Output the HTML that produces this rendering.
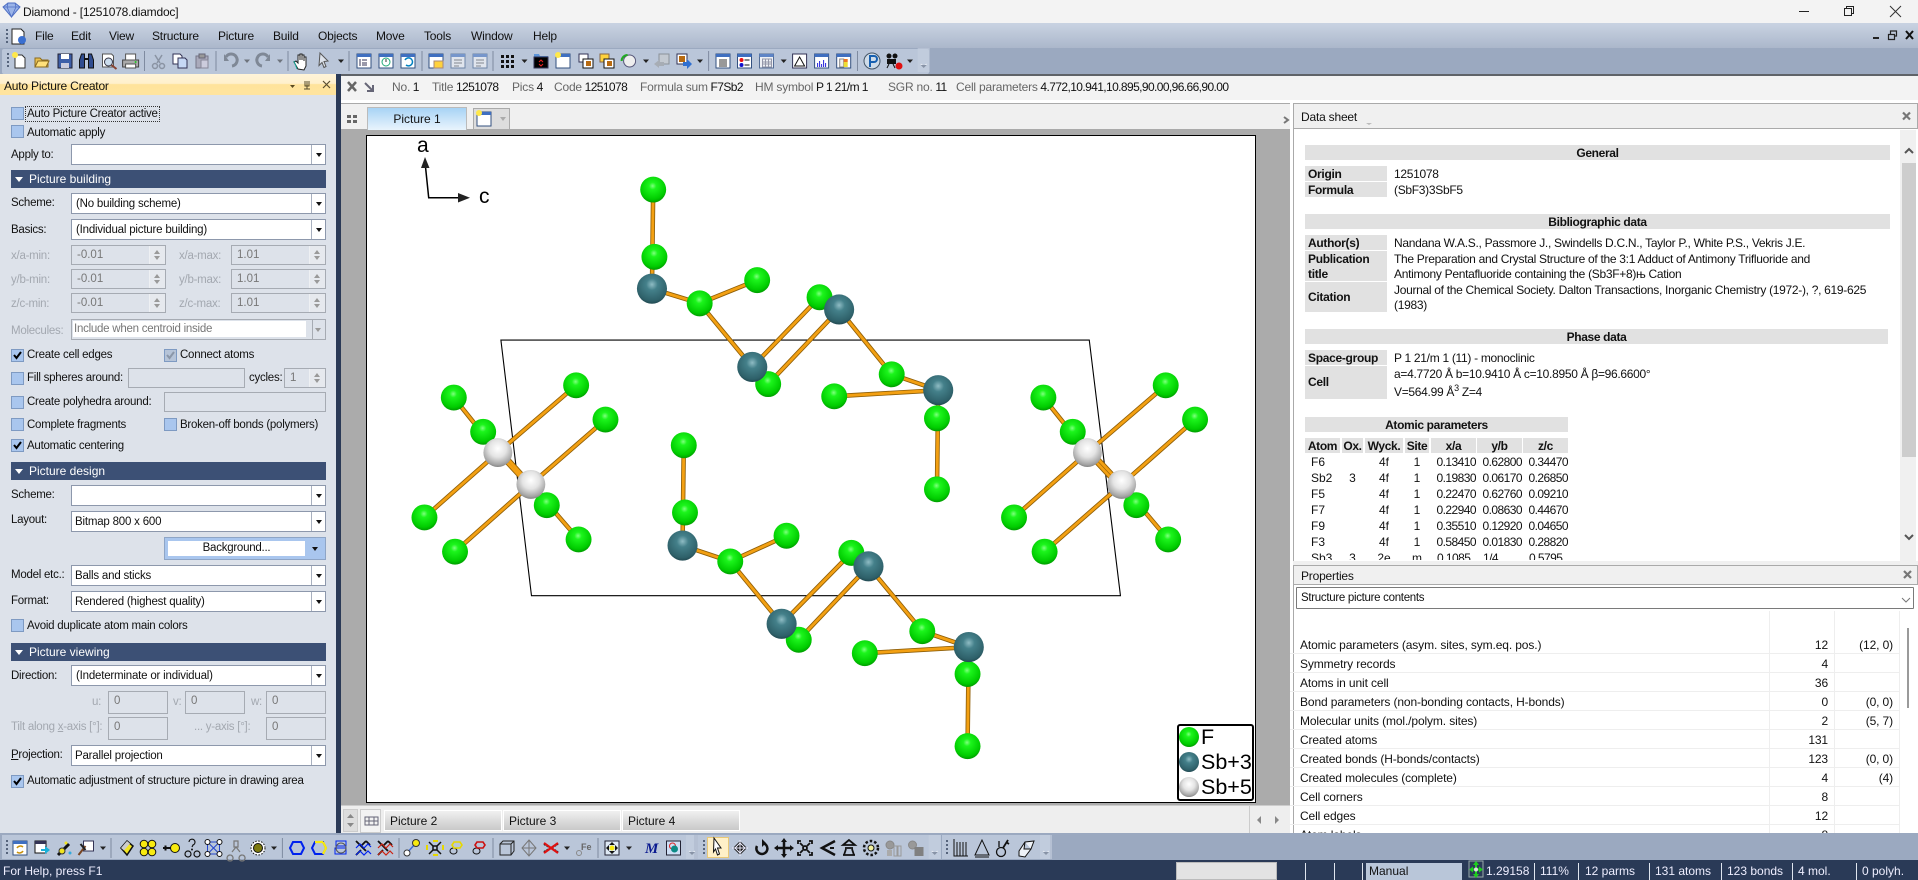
<!DOCTYPE html>
<html><head><meta charset="utf-8"><title>Diamond</title>
<style>
*{box-sizing:border-box}
html,body{margin:0;padding:0;width:1918px;height:880px;overflow:hidden;background:#9ba9c0}
body{position:relative;font:11.5px/16px "Liberation Sans",sans-serif;color:#111}
.a,.t,.c,.k,.s,.b,.i{position:absolute}
.t{white-space:nowrap;line-height:18px;letter-spacing:-.25px}
.t[style*="font-size"]{line-height:16px;letter-spacing:-.2px}
.t[style*="top:79px"]{letter-spacing:-.6px}
.c{left:71px;width:255px;height:21px;background:#fff;border:1px solid #8d98ac;padding:2px 3px;white-space:nowrap;letter-spacing:-.2px}
.c:after{content:"";position:absolute;right:0;top:0;bottom:0;width:13px;background:#fff;border-left:1px solid #a8b0bf}
.c:before{content:"";position:absolute;right:3px;top:8px;border:3px solid transparent;border-top:4px solid #111;border-bottom:0;z-index:2}
.k{left:11px;width:13px;height:13px;background:#a9c6ee;border:1px solid #7e9ac2}
.k svg{position:absolute;left:0;top:0}
.s{height:20px;background:#dde2ea;border:1px solid #a6abb3;color:#777;padding:1px 5px}
.s i{position:absolute;right:0;top:0;bottom:0;width:16px;background:#e6e9ee;border-left:1px solid #eef0f3}
.s i:before{content:"";position:absolute;left:4px;top:4px;border:3px solid transparent;border-bottom:4px solid #999;border-top:0}
.s i:after{content:"";position:absolute;left:4px;bottom:4px;border:3px solid transparent;border-top:4px solid #999;border-bottom:0}
.i{height:23px;background:#dde2ea;border:1px solid #a6abb3;color:#777;padding:1px 5px}
.b{left:11px;width:315px;height:18px;background:#3c5075;color:#fff;font-size:12px;line-height:18px;padding-left:18px}
.b:before{content:"";position:absolute;left:4px;top:7px;border:4px solid transparent;border-top:5px solid #fff;border-bottom:0}
.d{color:#a3a8b0}
.h{position:absolute;background:#e1e1e1;font-weight:bold;font-size:12px;line-height:15px;height:15px;padding-top:1px;text-align:center;color:#111;letter-spacing:-.35px}
.l{position:absolute;left:1305px;width:82px;height:15px;background:#e1e1e1;font-weight:bold;font-size:12px;line-height:15px;padding:1px 0 0 3px;letter-spacing:-.3px}
.v{position:absolute;left:1394px;margin-top:1px;font-size:12px;line-height:15px;white-space:nowrap;letter-spacing:-.3px}
.g{color:#666;letter-spacing:-.2px}
.r{position:absolute;left:1290px;width:610px;height:19px;font-size:12px;line-height:20px;border-bottom:1px solid #eee;letter-spacing:-.12px}
.r b{font-weight:normal;position:absolute;left:10px;top:0;white-space:nowrap}
.r u{text-decoration:none;position:absolute;right:72px;top:0}
.r s{text-decoration:none;position:absolute;right:7px;top:0}
table{position:absolute;left:1305px;top:454px;border-collapse:collapse;table-layout:fixed;width:263px;font-size:12px}
td{height:16px;padding:0;line-height:16px;text-align:center;overflow:hidden}
td.n{text-align:right;letter-spacing:-.55px}
td.f{text-align:left;padding-left:6px}
td.e{text-align:left;padding-left:7px;letter-spacing:-.55px}
.st{position:absolute;top:862px;color:#eef;font-size:12px;line-height:18px;white-space:nowrap}
.dv{position:absolute;top:863px;width:1px;height:17px;background:#dfe5ee}
.tab{position:absolute;top:810px;height:21px;border:1px solid #fff;background:linear-gradient(#f0f0f0,#c9c9c9);padding:2px 5px;font-size:12px;line-height:16px}
</style></head><body>

<!-- title bar -->
<div class="a" style="left:0;top:0;width:1918px;height:23px;background:#f3f3f3"></div>
<div class="t" style="left:23px;top:4px;font-size:12px;color:#111">Diamond - [1251078.diamdoc]</div>

<!-- menu + toolbar backgrounds -->
<div class="a" style="left:0;top:23px;width:1918px;height:25px;background:linear-gradient(#c9d3e2,#abb7cb)"></div>
<div class="a" style="left:0;top:48px;width:1918px;height:26px;background:#9ba9c0"></div>
<div class="a" style="left:2px;top:49px;width:927px;height:25px;background:#bac6d9;border-radius:2px"></div>
<div class="a" style="left:0;top:74px;width:1918px;height:2px;background:#5f6368"></div>
<div class="t" style="left:35px;top:28px;font-size:12px">File</div>
<div class="t" style="left:71px;top:28px;font-size:12px">Edit</div>
<div class="t" style="left:109px;top:28px;font-size:12px">View</div>
<div class="t" style="left:152px;top:28px;font-size:12px">Structure</div>
<div class="t" style="left:218px;top:28px;font-size:12px">Picture</div>
<div class="t" style="left:273px;top:28px;font-size:12px">Build</div>
<div class="t" style="left:318px;top:28px;font-size:12px">Objects</div>
<div class="t" style="left:376px;top:28px;font-size:12px">Move</div>
<div class="t" style="left:424px;top:28px;font-size:12px">Tools</div>
<div class="t" style="left:471px;top:28px;font-size:12px">Window</div>
<div class="t" style="left:533px;top:28px;font-size:12px">Help</div>

<!-- left panel -->
<div class="a" style="left:0;top:74px;width:336px;height:759px;background:#dde2ea"></div>
<div class="a" style="left:336px;top:74px;width:5px;height:759px;background:#2b3a57"></div>
<div class="a" style="left:0;top:74px;width:336px;height:21px;background:linear-gradient(#fff4d9 0,#fff0cc 45%,#ffe39b 50%,#ffe49f 100%)"></div>
<div class="t" style="left:4px;top:78px;font-size:12px">Auto Picture Creator</div>

<div class="k" style="top:107px"></div>
<div class="t" style="left:26px;top:107px;outline:1px dotted #333;padding:0 1px;height:14px;line-height:14px">Auto Picture Creator active</div>
<div class="k" style="top:125px"></div>
<div class="t" style="left:27px;top:124px">Automatic apply</div>
<div class="t" style="left:11px;top:146px">Apply to:</div>
<div class="c" style="top:144px"></div>
<div class="b" style="top:170px">Picture building</div>
<div class="t" style="left:11px;top:194px">Scheme:</div>
<div class="c" style="top:193px;padding-left:4px">(No building scheme)</div>
<div class="t" style="left:11px;top:221px">Basics:</div>
<div class="c" style="top:219px;padding-left:4px">(Individual picture building)</div>

<div class="t d" style="left:11px;top:247px">x/a-min:</div><div class="s" style="left:71px;top:245px;width:95px">-0.01<i></i></div>
<div class="t d" style="left:179px;top:247px">x/a-max:</div><div class="s" style="left:231px;top:245px;width:95px">1.01<i></i></div>
<div class="t d" style="left:11px;top:271px">y/b-min:</div><div class="s" style="left:71px;top:269px;width:95px">-0.01<i></i></div>
<div class="t d" style="left:179px;top:271px">y/b-max:</div><div class="s" style="left:231px;top:269px;width:95px">1.01<i></i></div>
<div class="t d" style="left:11px;top:295px">z/c-min:</div><div class="s" style="left:71px;top:293px;width:95px">-0.01<i></i></div>
<div class="t d" style="left:179px;top:295px">z/c-max:</div><div class="s" style="left:231px;top:293px;width:95px">1.01<i></i></div>

<div class="t d" style="left:11px;top:322px">Molecules:</div>
<div class="a" style="left:71px;top:319px;width:255px;height:21px;background:#dde2ea;border:1px solid #a6abb3"></div>
<div class="t" style="left:73px;top:321px;width:233px;height:16px;background:#fff;color:#777;padding-left:1px;line-height:16px">Include when centroid inside</div>
<div class="a" style="left:312px;top:320px;width:1px;height:19px;background:#a6abb3"></div>
<div class="a" style="left:315px;top:328px;border:3px solid transparent;border-top:4px solid #999;border-bottom:0"></div>

<div class="k" style="top:349px"><svg width="11" height="11" viewBox="0 0 11 11"><path d="M2 5l2.5 3L9 2" fill="none" stroke="#000" stroke-width="2"/></svg></div>
<div class="t" style="left:27px;top:346px">Create cell edges</div>
<div class="k" style="left:164px;top:349px;background:#b6c4d8"><svg width="11" height="11" viewBox="0 0 11 11"><path d="M2 5l2.5 3L9 2" fill="none" stroke="#8b97a8" stroke-width="2"/></svg></div>
<div class="t" style="left:180px;top:346px">Connect atoms</div>

<div class="k" style="top:372px"></div>
<div class="t" style="left:27px;top:369px">Fill spheres around:</div>
<div class="a" style="left:128px;top:368px;width:117px;height:20px;background:#dde2ea;border:1px solid #a6abb3"></div>
<div class="t" style="left:249px;top:369px">cycles:</div>
<div class="s" style="left:284px;top:368px;width:42px">1<i></i></div>

<div class="k" style="top:396px"></div>
<div class="t" style="left:27px;top:393px">Create polyhedra around:</div>
<div class="a" style="left:164px;top:392px;width:162px;height:20px;background:#dde2ea;border:1px solid #a6abb3"></div>

<div class="k" style="top:418px"></div>
<div class="t" style="left:27px;top:416px">Complete fragments</div>
<div class="k" style="left:164px;top:418px"></div>
<div class="t" style="left:180px;top:416px">Broken-off bonds (polymers)</div>

<div class="k" style="top:439px"><svg width="11" height="11" viewBox="0 0 11 11"><path d="M2 5l2.5 3L9 2" fill="none" stroke="#000" stroke-width="2"/></svg></div>
<div class="t" style="left:27px;top:437px">Automatic centering</div>

<div class="b" style="top:462px">Picture design</div>
<div class="t" style="left:11px;top:486px">Scheme:</div>
<div class="c" style="top:485px"></div>
<div class="t" style="left:11px;top:511px">Layout:</div>
<div class="c" style="top:511px">Bitmap 800 x 600</div>
<div class="a" style="left:164px;top:537px;width:162px;height:23px;background:#a9c6ee;border:1px solid #8ea5c6"></div>
<div class="t" style="left:168px;top:541px;width:137px;height:15px;background:#fff;text-align:center;line-height:15px">Background...</div>
<div class="a" style="left:312px;top:547px;border:3px solid transparent;border-top:4px solid #111;border-bottom:0"></div>
<div class="t" style="left:11px;top:566px">Model etc.:</div>
<div class="c" style="top:565px">Balls and sticks</div>
<div class="t" style="left:11px;top:592px">Format:</div>
<div class="c" style="top:591px">Rendered (highest quality)</div>
<div class="k" style="top:619px"></div>
<div class="t" style="left:27px;top:617px">Avoid duplicate atom main colors</div>

<div class="b" style="top:643px">Picture viewing</div>
<div class="t" style="left:11px;top:667px">Direction:</div>
<div class="c" style="top:665px;padding-left:4px">(Indeterminate or individual)</div>

<div class="t d" style="left:92px;top:693px">u:</div><div class="i" style="left:108px;top:691px;width:60px">0</div>
<div class="t d" style="left:173px;top:693px">v:</div><div class="i" style="left:185px;top:691px;width:60px">0</div>
<div class="t d" style="left:251px;top:693px">w:</div><div class="i" style="left:266px;top:691px;width:60px">0</div>
<div class="t d" style="left:11px;top:718px">Tilt along <span style="text-decoration:underline">x</span>-axis [°]:</div><div class="i" style="left:108px;top:717px;width:60px">0</div>
<div class="t d" style="left:194px;top:718px">... y-axis [°]:</div><div class="i" style="left:266px;top:717px;width:60px">0</div>

<div class="t" style="left:11px;top:746px"><span style="text-decoration:underline">P</span>rojection:</div>
<div class="c" style="top:745px">Parallel projection</div>
<div class="k" style="top:775px"><svg width="11" height="11" viewBox="0 0 11 11"><path d="M2 5l2.5 3L9 2" fill="none" stroke="#000" stroke-width="2"/></svg></div>
<div class="t" style="left:27px;top:772px">Automatic adjustment of structure picture in drawing area</div>

<!-- info bar -->
<div class="a" style="left:341px;top:76px;width:1577px;height:24px;background:#f3f3f3"></div>
<div class="a" style="left:341px;top:100px;width:1577px;height:3px;background:#fff"></div>
<div class="t" style="left:392px;top:79px;font-size:12px"><span class="g">No.</span> 1</div>
<div class="t" style="left:432px;top:79px;font-size:12px"><span class="g">Title</span> 1251078</div>
<div class="t" style="left:512px;top:79px;font-size:12px"><span class="g">Pics</span> 4</div>
<div class="t" style="left:554px;top:79px;font-size:12px"><span class="g">Code</span> 1251078</div>
<div class="t" style="left:640px;top:79px;font-size:12px"><span class="g">Formula sum</span> F7Sb2</div>
<div class="t" style="left:755px;top:79px;font-size:12px"><span class="g">HM symbol</span> P 1 21/m 1</div>
<div class="t" style="left:888px;top:79px;font-size:12px"><span class="g">SGR no.</span> 11</div>
<div class="t" style="left:956px;top:79px;font-size:12px"><span class="g">Cell parameters</span> 4.772,10.941,10.895,90.00,96.66,90.00</div>

<!-- center tabs -->
<div class="a" style="left:341px;top:103px;width:949px;height:27px;background:#f0f0f0;border-top:1px solid #aaa;border-bottom:1px solid #aaa"></div>
<div class="a" style="left:367px;top:107px;width:100px;height:23px;background:linear-gradient(#a8d3f5,#e9f4fd);border:1px solid #bbb;border-bottom:0;text-align:center;line-height:22px;font-size:12px">Picture 1</div>
<div class="a" style="left:473px;top:108px;width:37px;height:21px;background:#ddd;border:1px solid #aaa;border-bottom:0"></div>

<!-- drawing area -->
<div class="a" style="left:341px;top:130px;width:949px;height:675px;background:#ababab"></div>
<div class="a" style="left:366px;top:135px;width:890px;height:668px;background:#fff;border:1px solid #000;border-width:1.5px"></div>

<!-- bottom tabs -->
<div class="a" style="left:341px;top:805px;width:949px;height:28px;background:#eee;border-top:1px solid #ccc"></div>
<div class="a" style="left:343px;top:809px;width:15px;height:23px;background:#ddd;border:1px solid #ccc"></div>
<div class="a" style="left:360px;top:809px;width:21px;height:24px;background:#f3f3f3;border:1px solid #ccc"></div>
<div class="tab" style="left:384px;width:118px">Picture 2</div>
<div class="tab" style="left:503px;width:118px">Picture 3</div>
<div class="tab" style="left:622px;width:118px">Picture 4</div>
<div class="a" style="left:1249px;top:806px;width:1px;height:27px;background:#ccc"></div>

<!-- data sheet -->
<div class="a" style="left:1290px;top:103px;width:628px;height:462px;background:#fff"></div>
<div class="a" style="left:1293px;top:103px;width:625px;height:26px;background:#f0f0f0;border:1px solid #aaa"></div>
<div class="a" style="left:1293px;top:129px;width:1px;height:436px;background:#aaa"></div>
<div class="t" style="left:1301px;top:109px;font-size:12px">Data sheet</div>
<div class="a" style="left:1900px;top:130px;width:16px;height:431px;background:#f0f0f0"></div>
<div class="a" style="left:1902px;top:163px;width:14px;height:294px;background:#cdcdcd"></div>

<div class="h" style="left:1305px;top:145px;width:585px">General</div>
<div class="l" style="top:166px">Origin</div><div class="v" style="top:166px">1251078</div>
<div class="l" style="top:182px">Formula</div><div class="v" style="top:182px">(SbF3)3SbF5</div>

<div class="h" style="left:1305px;top:214px;width:585px">Bibliographic data</div>
<div class="l" style="top:235px">Author(s)</div><div class="v" style="top:235px">Nandana W.A.S., Passmore J., Swindells D.C.N., Taylor P., White P.S., Vekris J.E.</div>
<div class="l" style="top:251px;height:30px">Publication title</div><div class="v" style="top:251px">The Preparation and Crystal Structure of the 3:1 Adduct of Antimony Trifluoride and</div><div class="v" style="top:266px">Antimony Pentafluoride containing the (Sb3F+8)њ Cation</div>
<div class="l" style="top:282px;height:30px;line-height:28px">Citation</div><div class="v" style="top:282px">Journal of the Chemical Society. Dalton Transactions, Inorganic Chemistry (1972-), ?, 619-625</div><div class="v" style="top:297px">(1983)</div>

<div class="h" style="left:1305px;top:329px;width:583px">Phase data</div>
<div class="l" style="top:350px">Space-group</div><div class="v" style="top:350px">P 1 21/m 1 (11) - monoclinic</div>
<div class="l" style="top:366px;height:33px;line-height:31px">Cell</div><div class="v" style="top:366px">a=4.7720 Å b=10.9410 Å c=10.8950 Å β=96.6600°</div><div class="v" style="top:384px">V=564.99 Å<sup style="font-size:9px;line-height:0">3</sup> Z=4</div>

<div class="h" style="left:1305px;top:417px;width:263px">Atomic parameters</div>
<div class="h" style="left:1305px;top:438px;width:35px">Atom</div>
<div class="h" style="left:1342px;top:438px;width:21px">Ox.</div>
<div class="h" style="left:1365px;top:438px;width:38px">Wyck.</div>
<div class="h" style="left:1405px;top:438px;width:24px">Site</div>
<div class="h" style="left:1431px;top:438px;width:45px">x/a</div>
<div class="h" style="left:1477px;top:438px;width:45px">y/b</div>
<div class="h" style="left:1523px;top:438px;width:45px">z/c</div>
<div class="a" style="left:1305px;top:454px;width:270px;height:106px;overflow:hidden">
<table style="left:0;top:0">
<colgroup><col style="width:36px"><col style="width:23px"><col style="width:40px"><col style="width:26px"><col style="width:46px"><col style="width:46px"><col style="width:46px"></colgroup>
<tr><td class="f">F6</td><td></td><td>4f</td><td>1</td><td class="n">0.13410</td><td class="n">0.62800</td><td class="n">0.34470</td></tr>
<tr><td class="f">Sb2</td><td>3</td><td>4f</td><td>1</td><td class="n">0.19830</td><td class="n">0.06170</td><td class="n">0.26850</td></tr>
<tr><td class="f">F5</td><td></td><td>4f</td><td>1</td><td class="n">0.22470</td><td class="n">0.62760</td><td class="n">0.09210</td></tr>
<tr><td class="f">F7</td><td></td><td>4f</td><td>1</td><td class="n">0.22940</td><td class="n">0.08630</td><td class="n">0.44670</td></tr>
<tr><td class="f">F9</td><td></td><td>4f</td><td>1</td><td class="n">0.35510</td><td class="n">0.12920</td><td class="n">0.04650</td></tr>
<tr><td class="f">F3</td><td></td><td>4f</td><td>1</td><td class="n">0.58450</td><td class="n">0.01830</td><td class="n">0.28820</td></tr>
<tr><td class="f">Sb3</td><td>3</td><td>2e</td><td>m</td><td class="e">0.1085</td><td class="e">1/4</td><td class="e">0.5795</td></tr>
</table></div>

<!-- properties -->
<div class="a" style="left:1290px;top:561px;width:628px;height:272px;background:#fff"></div>
<div class="a" style="left:1293px;top:561px;width:625px;height:4px;background:#f0f0f0"></div>
<div class="a" style="left:1293px;top:565px;width:625px;height:20px;background:#f0f0f0;border:1px solid #aaa"></div>
<div class="a" style="left:1293px;top:585px;width:1px;height:248px;background:#aaa"></div>
<div class="t" style="left:1301px;top:568px;font-size:12px">Properties</div>
<div class="a" style="left:1296px;top:587px;width:618px;height:22px;background:#fff;border:1px solid #7a7a7a;border-radius:1px"></div>
<div class="t" style="left:1301px;top:590px;font-size:11.5px;letter-spacing:-.3px">Structure picture contents</div>
<div class="a" style="left:1290px;top:611px;width:628px;height:222px;overflow:hidden">
 <div class="a" style="left:479px;top:0;width:1px;height:222px;background:#eee"></div>
 <div class="a" style="left:544px;top:0;width:1px;height:222px;background:#eee"></div>
 <div class="a" style="left:609px;top:0;width:1px;height:222px;background:#eee"></div>
 <div class="a" style="left:617px;top:17px;width:2px;height:80px;background:#9a9a9a"></div>
 <div class="r" style="left:0;top:24px"><b>Atomic parameters (asym. sites, sym.eq. pos.)</b><u>12</u><s>(12, 0)</s></div>
 <div class="r" style="left:0;top:43px"><b>Symmetry records</b><u>4</u></div>
 <div class="r" style="left:0;top:62px"><b>Atoms in unit cell</b><u>36</u></div>
 <div class="r" style="left:0;top:81px"><b>Bond parameters (non-bonding contacts, H-bonds)</b><u>0</u><s>(0, 0)</s></div>
 <div class="r" style="left:0;top:100px"><b>Molecular units (mol./polym. sites)</b><u>2</u><s>(5, 7)</s></div>
 <div class="r" style="left:0;top:119px"><b>Created atoms</b><u>131</u></div>
 <div class="r" style="left:0;top:138px"><b>Created bonds (H-bonds/contacts)</b><u>123</u><s>(0, 0)</s></div>
 <div class="r" style="left:0;top:157px"><b>Created molecules (complete)</b><u>4</u><s>(4)</s></div>
 <div class="r" style="left:0;top:176px"><b>Cell corners</b><u>8</u></div>
 <div class="r" style="left:0;top:195px"><b>Cell edges</b><u>12</u></div>
 <div class="r" style="left:0;top:214px"><b>Atom labels</b><u>8</u></div>
</div>

<!-- bottom toolbars -->
<div class="a" style="left:0;top:833px;width:1918px;height:27px;background:#9ba9c0"></div>
<div class="a" style="left:2px;top:835px;width:692px;height:24px;background:#bac6d9"></div>
<div class="a" style="left:698px;top:835px;width:243px;height:24px;background:#bac6d9"></div>
<div class="a" style="left:942px;top:835px;width:108px;height:24px;background:#bac6d9"></div>
<div class="a" style="left:707px;top:837px;width:22px;height:21px;background:#fff0c8;border:1px solid #e8c878"></div>

<!-- status bar -->
<div class="a" style="left:0;top:860px;width:1918px;height:20px;background:#2a3a57"></div>
<div class="st" style="left:3px;font-size:12px">For Help, press F1</div>
<div class="a" style="left:1176px;top:862px;width:101px;height:18px;background:#e3e3e3;border:1px solid #bbb"></div>
<div class="dv" style="left:1305px"></div><div class="dv" style="left:1334px"></div><div class="dv" style="left:1362px"></div>
<div class="a" style="left:1366px;top:863px;width:96px;height:17px;background:#b9c6d9;color:#111;font-size:12px;line-height:17px;padding-left:3px">Manual</div>
<div class="st" style="left:1486px">1.29158</div><div class="dv" style="left:1534px"></div>
<div class="st" style="left:1540px">111%</div><div class="dv" style="left:1578px"></div>
<div class="st" style="left:1585px">12 parms</div><div class="dv" style="left:1649px"></div>
<div class="st" style="left:1655px">131 atoms</div><div class="dv" style="left:1721px"></div>
<div class="st" style="left:1727px">123 bonds</div><div class="dv" style="left:1792px"></div>
<div class="st" style="left:1798px">4 mol.</div><div class="dv" style="left:1856px"></div>
<div class="st" style="left:1862px">0 polyh.</div>

<!-- graphics overlay -->
<svg class="a" style="left:0;top:0" width="1918" height="880" viewBox="0 0 1918 880" xmlns="http://www.w3.org/2000/svg">
<defs>
<radialGradient id="gF" cx=".48" cy=".36" r=".64"><stop offset="0" stop-color="#80ff80"/><stop offset=".22" stop-color="#1cf51c"/><stop offset=".8" stop-color="#00cc00"/><stop offset="1" stop-color="#009c00"/></radialGradient>
<radialGradient id="gT" cx=".5" cy=".36" r=".64"><stop offset="0" stop-color="#8fbcc4"/><stop offset=".3" stop-color="#44808a"/><stop offset=".85" stop-color="#2e6069"/><stop offset="1" stop-color="#224a52"/></radialGradient>
<radialGradient id="gW" cx=".5" cy=".36" r=".66"><stop offset="0" stop-color="#ffffff"/><stop offset=".45" stop-color="#e4e4e4"/><stop offset=".85" stop-color="#a4a4a4"/><stop offset="1" stop-color="#7c7c7c"/></radialGradient>
<g id="F"><circle r="10.6" fill="url(#gF)"/></g>
<g id="T"><circle r="12.3" fill="url(#gT)"/></g>
<g id="W"><circle r="11.8" fill="url(#gW)"/></g>
<g id="tri"><path d="M-3-1.5h6L0 2z" fill="#222"/></g>
<g id="win"><rect x="-7" y="-7" width="14" height="14" fill="#fff" stroke="#33507f"/><rect x="-7" y="-7" width="14" height="3" fill="#3f6fc0"/></g>
<g id="grip"><path d="M0-8v2M0-4v2M0 0v2M0 4v2" stroke="#56647c" stroke-width="2"/></g>
<g id="chev"><rect x="-6" y="-13" width="12" height="24" fill="#c6d0e0" opacity=".6"/><path d="M-3 3l3 2 3-2" fill="none" stroke="#e8ecf2" stroke-width="1"/><path d="M-3 4h6L0 7z" fill="#8893a6"/></g>
<g id="hex"><path d="M-4-6h8l3 6-3 6h-8l-3-6z" fill="none" stroke-width="2"/></g>
<path id="bd" d="M534 155L533 236L572 248L615 300L670 243M572 248L619 229M628 314L686 253L729 306L767 319L682 324M767 319L766 400M559 364L558 446L597 459L639 510L696 452M597 459L643 438M653 523L710 463L754 516L792 529L707 534M792 529L791 610M371 325L407 370L447 413M395 353L434 396L473 441M471 315L407 370L347 423M495 343L434 396L372 451M853 325L889 370L929 413M877 353L917 396L955 441M953 315L889 370L829 423M977 343L917 396L854 451" fill="none"/>
</defs>

<!-- structure -->
<g transform="scale(1.2232)">
<path d="M409.500 278H890.500L916 487H434.500Z" fill="none" stroke="#000" stroke-width=".9"/>
<use href="#bd" stroke="#8f5f08" stroke-width="3.700"/>
<use href="#bd" stroke="#f3a012" stroke-width="2.300"/>
<use href="#F" x="535" y="210"/><use href="#F" x="534" y="155"/><use href="#T" x="533" y="236"/><use href="#F" x="572" y="248"/><use href="#F" x="619" y="229"/><use href="#F" x="670" y="243"/><use href="#F" x="628" y="314"/><use href="#T" x="615" y="300"/><use href="#T" x="686" y="253"/><use href="#F" x="729" y="306"/><use href="#F" x="682" y="324"/><use href="#F" x="766" y="342"/><use href="#T" x="767" y="319"/><use href="#F" x="766" y="400"/>
<use href="#F" x="560" y="419"/><use href="#F" x="559" y="364"/><use href="#T" x="558" y="446"/><use href="#F" x="597" y="459"/><use href="#F" x="643" y="438"/><use href="#F" x="696" y="452"/><use href="#F" x="653" y="523"/><use href="#T" x="639" y="510"/><use href="#T" x="710" y="463"/><use href="#F" x="754" y="516"/><use href="#F" x="707" y="534"/><use href="#F" x="791" y="551"/><use href="#T" x="792" y="529"/><use href="#F" x="791" y="610"/>
<use href="#F" x="371" y="325"/><use href="#F" x="471" y="315"/><use href="#F" x="495" y="343"/><use href="#F" x="395" y="353"/><use href="#W" x="407" y="370"/><use href="#F" x="447" y="413"/><use href="#W" x="434" y="396"/><use href="#F" x="347" y="423"/><use href="#F" x="372" y="451"/><use href="#F" x="473" y="441"/>
<use href="#F" x="853" y="325"/><use href="#F" x="953" y="315"/><use href="#F" x="977" y="343"/><use href="#F" x="877" y="353"/><use href="#W" x="889" y="370"/><use href="#F" x="929" y="413"/><use href="#W" x="917" y="396"/><use href="#F" x="829" y="423"/><use href="#F" x="854" y="451"/><use href="#F" x="955" y="441"/>
</g>

<!-- axes -->
<path d="M425 162L428.700 197.700H458" fill="none" stroke="#000" stroke-width="1.500"/>
<path d="M425 157L421 168H429.500Z" fill="#222"/><path d="M470 197.700L458 193V202.500Z" fill="#222"/>
<text x="417" y="152" font-family="Liberation Sans" font-size="21" fill="#000">a</text>
<text x="479" y="203" font-family="Liberation Sans" font-size="21" fill="#000">c</text>

<!-- legend -->
<rect x="1178" y="725" width="75" height="75" rx="2" fill="#fff" stroke="#000" stroke-width="2"/>
<circle cx="1189" cy="737" r="10" fill="url(#gF)"/><circle cx="1189" cy="762" r="10" fill="url(#gT)"/><circle cx="1189" cy="787" r="10" fill="url(#gW)"/>
<g font-family="Liberation Sans" font-size="21.500" fill="#000"><text x="1201" y="744">F</text><text x="1201" y="769">Sb+3</text><text x="1201" y="794">Sb+5</text></g>

<!-- window controls -->
<path d="M1799 11.500h10" stroke="#222"/><path d="M1844.500 8.500h7v7h-7zM1846.500 8.500v-2h7v7h-2" fill="none" stroke="#222"/><path d="M1890 6l11 11M1901 6l-11 11" stroke="#333"/>
<path d="M1873 38h6" stroke="#222" stroke-width="2"/><path d="M1888.500 34.500h6v5h-6zM1890.500 34v-3h6v5h-2" fill="none" stroke="#222" stroke-width="1.200"/><path d="M1906 31l7 8M1913 31l-7 8" stroke="#111" stroke-width="2"/>
<!-- app icons -->
<path d="M3 7l5-4h7l5 4-8.500 10z" fill="#9bb4e8" stroke="#4f6fc4"/><path d="M3 7h17M8 3l-1 4 4.500 10L16 7l-1-4" fill="none" stroke="#4f6fc4" stroke-width=".8"/>
<g transform="translate(8,35)" stroke="#222"><use href="#grip" x="-1" y="2"/></g>
<path d="M12 29h9l3 3v12H12z" fill="#fff" stroke="#222"/><circle cx="22" cy="40" r="4" fill="#3a6fd0"/>

<!-- panel header icons -->
<path d="M288 85h5l-2.500 3z" fill="#5a4a20" transform="translate(2,0)"/><path d="M307 81v8M304 89h6M305 81v5h4v-5" fill="none" stroke="#554a2a"/><path d="M323 81l7 7M330 81l-7 7" stroke="#5a4e30" stroke-width="1.200"/>
<path d="M348 82l8 9M356 82l-8 9" stroke="#666" stroke-width="2.500"/><path d="M365 83l8 8M373 85v6h-6" fill="none" stroke="#667" stroke-width="2"/>
<!-- tab row icons -->
<path d="M347 115h4v3h-4zM353 115h4v3h-4zM347 120h4v3h-4zM353 120h4v3h-4z" fill="#666"/>
<use href="#win" x="484" y="119"/><circle cx="479" cy="113" r="3" fill="#ffe84a"/><path d="M500 117h6l-3 4z" fill="#aaa"/>
<path d="M1284 117l4 3-4 3" fill="none" stroke="#777" stroke-width="2"/>
<path d="M1903 112.500l7 7M1910 112.500l-7 7" stroke="#777" stroke-width="2.200"/><path d="M1904 571l7 7M1911 571l-7 7" stroke="#777" stroke-width="2.200"/>
<path d="M1366 123h6l-3 2z" fill="#bbb"/>
<path d="M1905 153l4-4 4 4" fill="none" stroke="#555" stroke-width="2"/><path d="M1905 535l4 4 4-4" fill="none" stroke="#555" stroke-width="2"/>
<path d="M1902 598l4 4 4-4" fill="none" stroke="#777"/>
<path d="M347 818l3.500-4 3.500 4zM347 823l3.500 4 3.500-4z" fill="#888"/>
<path d="M365 817h13v8h-13zM365 821h13M369 817v8M374 817v8" fill="none" stroke="#667"/>
<path d="M1264 820l-4 4 4 4z" fill="#888" transform="translate(-3,-4)"/><path d="M1275 816l4 4-4 4z" fill="#888"/>

<!-- top toolbar -->
<use href="#grip" x="8" y="61"/>
<g transform="translate(20,61)"><path d="M-5-6h7l3 3v10h-10z" fill="#fff" stroke="#333"/><circle cx="-5" cy="-6" r="3" fill="#ffe84a"/></g>
<g transform="translate(43,61)"><path d="M-8 6v-9h5l2 2h6v7z" fill="#e8c050" stroke="#8a6a20"/><path d="M-8 6l3-6h11l-3 6z" fill="#ffe07a" stroke="#8a6a20"/></g>
<g transform="translate(65,61)"><path d="M-7-7h14v14h-14z" fill="#3e5fa8" stroke="#223"/><path d="M-4-7h8v5h-8z" fill="#fff"/><path d="M-4 2h8v5h-8z" fill="#ccd"/></g>
<g transform="translate(86.500,61)"><path d="M-7 7v-8l2-6h3v14zM7 7v-8l-2-6h-3v14z" fill="#2f4c90" stroke="#111"/><path d="M-2-2h4" stroke="#111" stroke-width="2"/></g>
<g transform="translate(108.500,61)"><path d="M-6-7h9l2 2v11h-11z" fill="#fff" stroke="#555"/><circle cx="0" cy="1" r="4" fill="#cde" stroke="#334"/><path d="M3 4l5 4" stroke="#843" stroke-width="2"/></g>
<g transform="translate(130.600,61)"><path d="M-8-1h16v7h-16z" fill="#aaa" stroke="#444"/><path d="M-5-7h10v6h-10zM-5 3h10v4h-10z" fill="#fff" stroke="#555"/><circle cx="5" cy="1" r="1" fill="#2c2"/></g>
<path d="M144.500 51v20M216 51v20M288 51v20M349 51v20M422 51v20M493 51v20M708.600 51v20M857.500 51v20" stroke="#7f8ba0"/>
<g stroke="#8a93a3" fill="none" stroke-width="1.500"><path d="M155 55l5 8M162 55l-5 8"/><circle cx="155" cy="66" r="2.500"/><circle cx="162" cy="66" r="2.500"/></g>
<g transform="translate(180,61)"><path d="M-7-7h7l2 2v8h-9z" fill="#fff" stroke="#335"/><path d="M-2-3h7l2 2v8h-9z" fill="#c6d8f5" stroke="#335"/></g>
<g transform="translate(202,61)"><path d="M-6-5h12v12h-12z" fill="#aab" stroke="#778"/><path d="M-3-7h6v4h-6z" fill="#999" stroke="#667"/><path d="M-1-1h7v8h-7z" fill="#ccd" stroke="#889"/></g>
<g fill="none" stroke="#7f8896" stroke-width="3"><path d="M226 57a6 6 0 1 1 6 9"/><path d="M268 57a6 6 0 1 0-6 9"/></g>
<path d="M224 54v7h5zM270 54v7h-5z" fill="#7f8896"/>
<use href="#tri" x="247" y="61" opacity=".5"/><use href="#tri" x="280" y="61" opacity=".5"/>
<g transform="translate(302,61)"><path d="M-4 8l-4-7 2-1 2 2v-8h2v5-6h2v6-5h2v6-4h2v9l-2 4z" fill="#fff" stroke="#222"/><path d="M-8 0l3 8" stroke="#1a9" stroke-width="1"/></g>
<path d="M320 53l8 8-4 .5 2 5-2 1-2-5-3 3z" fill="#dde2ea" stroke="#555"/>
<use href="#tri" x="341" y="61"/>
<g transform="translate(364,61)"><use href="#win"/><path d="M-2-1h5M-2 2h5M-2 4h5M-4-2v7" stroke="#335"/></g>
<g transform="translate(386,61)"><use href="#win"/><circle cy="1" r="4" fill="none" stroke="#2a7"/><path d="M0 1v-3" stroke="#333"/></g>
<g transform="translate(408,61)"><use href="#win"/><path d="M-3-1a4 4 0 1 1 1 5" fill="none" stroke="#0080c0" stroke-width="1.500"/></g>
<g transform="translate(436,61)"><use href="#win"/><path d="M-2 0h9v7h-9z" fill="#ffd23c" stroke="#a87"/></g>
<g transform="translate(458,61)" opacity=".55"><use href="#win"/><path d="M-4-1h8M-4 2h8M-4 5h5" stroke="#555"/></g>
<g transform="translate(480,61)" opacity=".55"><use href="#win"/><path d="M-4-1h8M-4 2h8M-4 5h5" stroke="#555"/></g>
<g transform="translate(508,61)" fill="#111"><path d="M-7-6h3v3h-3zM-2-6h3v3h-3zM3-6h3v3h-3zM-7-1h3v3h-3zM-2-1h3v3h-3zM3-1h3v3h-3zM-7 4h3v3h-3zM-2 4h3v3h-3zM3 4h3v3h-3z"/></g>
<use href="#tri" x="524.500" y="61"/>
<g transform="translate(541,61)"><path d="M-7-7h5l1 2h8v2h-14z" fill="#5c94d8"/><path d="M-7-4h14v11h-14z" fill="#000" stroke="#335"/><path d="M-2 1l2-2 2 2M-2 3l2 2 2-2" fill="none" stroke="#e22"/></g>
<g transform="translate(563,61)"><use href="#win"/><circle cx="-5" cy="-6" r="3" fill="#ffe84a"/></g>
<g transform="translate(586,61)"><path d="M-7-7h9v8h-9z" fill="#fff" stroke="#335"/><path d="M-3-2h10v9h-10z" fill="#fff" stroke="#111"/><path d="M0 0h5v5h-5z" fill="#b86a10"/></g>
<g transform="translate(607,61)"><path d="M-7-7h9v8h-9z" fill="#ffd23c" stroke="#864"/><path d="M-3-2h10v9h-10z" fill="#fff" stroke="#111"/><path d="M0 0h5v5h-5z" fill="#b86a10"/></g>
<g transform="translate(628.600,61)"><circle r="6" cx="1" fill="#eee" stroke="#557"/><path d="M-7 0a6 6 0 0 1 6-6" fill="none" stroke="#2a2" stroke-width="2"/></g>
<use href="#tri" x="646" y="61"/>
<g transform="translate(662,61)" opacity=".55"><path d="M-3-7h10v10h-10z" fill="#ccc" stroke="#666"/><path d="M-8 3l5-4v2h5v4h-5v2z" fill="#999"/></g>
<g transform="translate(684,61)"><path d="M-7-7h10v10h-10z" fill="#fff" stroke="#335"/><path d="M-5-5h6v6h-6z" fill="#b86a10"/><path d="M-1 1h4v-3l5 5-5 5v-3h-4z" fill="#2f6fd0"/></g>
<use href="#tri" x="700" y="61"/>
<g transform="translate(723,61)"><use href="#win"/><path d="M-4-1h8M-4 1h8M-4 3h8M-4 5h8" stroke="#333"/></g>
<g transform="translate(744.500,61)"><use href="#win"/><circle cx="-3" cy="-1" r="2" fill="#e11"/><circle cx="-3" cy="4" r="2" fill="#11c"/><path d="M0-1h5M0 4h5" stroke="#111"/></g>
<g transform="translate(766.500,61)" opacity=".75"><use href="#win"/><path d="M-4-2h9v8h-9zM-4 1h9M-4 3h9M-1-2v8M2-2v8" fill="none" stroke="#889"/></g>
<use href="#tri" x="783.700" y="61"/>
<g transform="translate(799.600,61)"><path d="M-7-7h14v14h-14z" fill="#fff" stroke="#335"/><path d="M-5 5l5-9 5 9z" fill="none" stroke="#111"/></g>
<g transform="translate(821.600,61)"><use href="#win"/><path d="M-4 6v-4M-2 6v-6M0 6v-3M2 6v-7M4 6v-4" stroke="#22d"/></g>
<g transform="translate(843.700,61)"><use href="#win"/><path d="M-4-2h4v8h-4z" fill="#eee" stroke="#888"/><path d="M0-2h4v3h-4z" fill="#e72"/><path d="M0 1h4v5h-4z" fill="#ed3"/></g>
<g transform="translate(872,61)"><circle r="8" fill="#cfdce9" stroke="#456"/><path d="M-2 6v-11h4a3 3 0 0 1 0 6h-4" fill="none" stroke="#1760b0" stroke-width="2"/></g>
<g transform="translate(893,61)" fill="#111"><circle cx="-4" cy="-5" r="2.500"/><circle cx="2" cy="-5" r="2.500"/><path d="M-6-2h9v5h-9z"/><circle cx="6" cy="5" r="3.500" fill="#e01010"/><path d="M-4 3l-2 4M0 3l2 4" stroke="#111"/></g>
<use href="#tri" x="910" y="61"/>
<use href="#chev" x="923.700" y="61"/>

<!-- bottom toolbar -->
<use href="#grip" x="7" y="848"/>
<g transform="translate(20,848)"><use href="#win"/><path d="M-3 0a4 4 0 0 1 6-1M3 3a4 4 0 0 1-6 1" fill="none" stroke="#c8900a" stroke-width="1.500"/></g>
<g transform="translate(42,848)"><path d="M-7-7h11v12h-11z" fill="#fff" stroke="#111"/><path d="M-7-7h11v3h-11z" fill="#335"/><path d="M-1 1h4v-3l5 4-5 4v-3h-4z" fill="#18b0d8"/></g>
<g transform="translate(65,848)"><path d="M-7 7l11-11" stroke="#111" stroke-width="3"/><circle cx="-3" cy="3" r="3" fill="#f2e520" stroke="#333"/><circle cx="1" cy="-5" r="1.500" fill="#f2e520"/><circle cx="5" cy="5" r="1.500" fill="#3ad"/></g>
<g transform="translate(86.500,848)"><path d="M-3-7h10v10h-10z" fill="#fff" stroke="#335"/><path d="M-8 7l7-9" stroke="#742" stroke-width="2"/><path d="M-6-4l5 6" stroke="#222" stroke-width="2"/></g>
<use href="#tri" x="103" y="848"/>
<path d="M111 838v20M282.400 838v20M399 838v20M493 838v20M598 838v20" stroke="#7f8ba0"/>
<g transform="translate(127,848)"><path d="M-6 0l6-7 6 5-6 9z" fill="#f2e520" stroke="#111" stroke-width="1.500"/><path d="M-6 0l6-7 3 2.500-6 7z" fill="#ccc"/></g>
<g stroke="#111" fill="#f8ea10"><circle cx="144" cy="844" r="3.800"/><circle cx="152" cy="844" r="3.800"/><circle cx="144" cy="852" r="3.800"/><circle cx="152" cy="852" r="3.800"/></g>
<path d="M163 848h5M165.500 845.500v5" stroke="#111" stroke-width="2"/><path d="M168 848h4" stroke="#111" stroke-width="2"/><circle cx="175" cy="848" r="4.500" fill="#f8ea10" stroke="#111"/>
<g fill="none" stroke="#111" stroke-width="1.200"><circle cx="188" cy="854" r="3"/><circle cx="197" cy="854" r="3"/><path d="M189 842a3 3 0 1 1 4 3l-1 2"/></g><circle cx="192" cy="849.500" r="1" fill="#111"/>
<g transform="translate(213.500,848)" fill="none" stroke="#2244cc"><path d="M-6-6h12v12h-12zM-6-6l12 12M6-6l-12 12"/><g fill="#fff" stroke="#111"><circle cx="-6" cy="-6" r="2.500"/><circle cx="6" cy="-6" r="2.500"/><circle cx="-6" cy="6" r="2.500"/><circle cx="6" cy="6" r="2.500"/></g></g>
<g transform="translate(236,848)" fill="none" stroke="#777"><path d="M-2-7h4v6h-4zM-6 7a3 3 0 1 0 .1 0M6 7a3 3 0 1 0 .1 0M0-1l-4 5M0-1l4 5" stroke-width="1.200"/></g>
<g transform="translate(258,848)"><circle r="7" fill="#fff" stroke="#111" stroke-dasharray="1.500 1.500"/><circle r="4.500" fill="#7d7a10" stroke="#111"/></g>
<use href="#tri" x="274" y="848"/>
<use href="#hex" x="297" y="848" stroke="#0022ee"/>
<g transform="translate(319,848)"><use href="#hex" stroke="#0022ee"/><path d="M4-6l3 6-3 6" fill="none" stroke="#f8ea10" stroke-width="2.200"/><path d="M-4-6h8" stroke="#f8ea10" stroke-width="2.200"/></g>
<g transform="translate(341,848)" fill="none" stroke="#0022ee"><path d="M-5-7h10v5h-10zM-6 0h11v6h-11z"/><circle cx="0" r="5" stroke="#555"/></g>
<g transform="translate(363,848)" stroke-width="1.800" fill="none"><path d="M-7-7l5 5 5-5M-2-2l5 5M3-7l4 4M-7 7l5-5" stroke="#111"/><path d="M-7 0l4-4 4 4 4-4 3 3M-7 7l4-4 4 4 4-4 3 3" stroke="#0022ee" stroke-width="1.200"/></g>
<g transform="translate(385,848)" stroke-width="1.800" fill="none"><path d="M-7-7l5 5 5-5M-2-2l5 5M3-7l4 4M-7 7l5-5" stroke="#111"/><path d="M-7 0l4-4 4 4 4-4 3 3M-7 7l4-4 4 4 4-4 3 3" stroke="#cc2211" stroke-width="1.200"/></g>
<g transform="translate(412,848)"><path d="M-6 6L4-5" stroke="#3d6bd6" stroke-width="1.500"/><circle cx="-5" cy="5" r="3" fill="#fff" stroke="#333"/><circle cx="4" cy="-5" r="3.500" fill="#f8ea10" stroke="#333"/></g>
<g transform="translate(435,848)" fill="none"><path d="M-6-6l4 4h4l4-4M-6 6l4-4h4l4 4M-2-2v4M2-2v4" stroke="#111" stroke-width="1.500"/><path d="M-2-7h5M-2 7h5M-8-3v5M8-3v5" stroke="#e6d800" stroke-width="2"/></g>
<g transform="translate(457,848)" fill="none" stroke="#111"><path d="M-7 3a3.500 3 0 1 0 7 0 3.500 3 0 1 0-7 0z"/><path d="M-3-6h6l2 3-2 3h-6l-2-3z" stroke="#e6d800" stroke-width="1.600"/></g>
<g transform="translate(480,848)" fill="none" stroke="#111"><path d="M-7 3a3.500 3 0 1 0 7 0 3.500 3 0 1 0-7 0z"/><path d="M-3-6h6l2 3-2 3h-6l-2-3z" stroke="#cc1111" stroke-width="1.600"/></g>
<g transform="translate(507,848)" fill="none" stroke="#222"><path d="M-7-4l3-3h11v10l-3 4h-11zM-7-4h11v11M4-4l3-3"/></g>
<g transform="translate(529,848)" fill="none" stroke="#777"><path d="M0-8l7 8-7 8-7-8zM-7 0h14M0-8v16"/></g>
<g transform="translate(551,848)"><path d="M-7-4l14 8M-7 4l14-8" stroke="#111" stroke-width="2" stroke-dasharray="2 1"/><path d="M-7 5L7-5M-7-5L7 5" stroke="#e01010" stroke-width="2.200"/></g>
<use href="#tri" x="567" y="848"/>
<g><circle cx="579" cy="853" r="2.500" fill="none" stroke="#888"/><text x="581" y="850" font-family="Liberation Sans" font-size="9" font-weight="bold" fill="#666">Fe</text></g>
<g transform="translate(612,848)"><path d="M-7-7h14v14h-14z" fill="#dfe9f5" stroke="#223"/><path d="M0-6l3 3h-6zM0 6l3-3h-6zM-6 0l3-3v6zM6 0l-3-3v6z" fill="#111"/><circle r="2.500" fill="#f8ea10"/></g>
<use href="#tri" x="629" y="848"/>
<text x="645" y="853" font-family="Liberation Serif" font-size="15" font-weight="bold" font-style="italic" fill="#0a1a90">M</text>
<g transform="translate(673.500,848)"><path d="M-7-7h14v14h-14z" fill="#cfdff5" stroke="#223"/><circle cx="-1" cy="-2" r="3" fill="none" stroke="#d22"/><circle cx="1" cy="1" r="3.500" fill="#0c8a86"/></g>
<use href="#chev" x="692" y="848"/>
<use href="#grip" x="704" y="848"/>
<path d="M714 838l7 10-3.500 0 2 6-2 1-2-6-2 3z" fill="#fff" stroke="#111"/>
<g transform="translate(740,848)"><path d="M-7 0l7-7 7 7-7 7z" fill="#111"/><path d="M-5 0l5-5 5 5-5 5zM-8 0h16M0-8v16" fill="none" stroke="#eef" stroke-width="1"/></g>
<path d="M757 846a5.500 5.500 0 1 0 5-3" fill="none" stroke="#111" stroke-width="2.500"/><path d="M762 839v8l4-4z" fill="#111"/>
<path d="M784 841v14M777 848h14" stroke="#111" stroke-width="2.500"/><path d="M784 838l-3 4h6zM784 858l-3-4h6zM774 848l4-3v6zM794 848l-4-3v6z" fill="#111"/>
<g transform="translate(805,848)" fill="none" stroke="#111" stroke-width="1.800"><path d="M-5-5l3 3M5-5l-3 3M-5 5l3-3M5 5l-3-3"/><path d="M-7-4v-3h3M7-4v-3h-3M-7 4v3h3M7 4v3h-3"/><circle r="2"/></g>
<path d="M835 841l-13 7 13 7" fill="none" stroke="#111" stroke-width="2.500"/><path d="M830 848h4" stroke="#111" stroke-width="2"/>
<g transform="translate(849,848)" stroke="#111" stroke-width="1.800" fill="none"><path d="M0-8l-6 5h12zM-4 0h8M-5 7l2-6M5 7l-2-6M-6 7h12"/></g>
<g transform="translate(871,848)"><circle r="3" fill="#f3f3a0" stroke="#111"/><circle r="7" fill="none" stroke="#111" stroke-width="2.500" stroke-dasharray="2.500 2"/></g>
<g transform="translate(893,848)"><circle cx="-3" cy="-3" r="4" fill="#999" stroke="#888"/><path d="M1-2h3v10h-3zM5-2h3v10h-3z" fill="none" stroke="#999"/><path d="M-6 2h5v6h-5z" fill="#aaa"/></g>
<g transform="translate(915.500,848)"><circle cx="-3" cy="-3" r="4" fill="#999" stroke="#888"/><path d="M-1-1h9v9h-9z" fill="#808080"/></g>
<use href="#chev" x="934.700" y="848"/>
<use href="#grip" x="947" y="848"/>
<path d="M954 839v17h14M957 842v14M960 842v14M963 842v14M966 842v14" fill="none" stroke="#111"/>
<path d="M982 840l-7 15h14zM975 857h14" fill="none" stroke="#111"/>
<g fill="none" stroke="#111"><circle cx="1001" cy="852" r="4.500" stroke-width="1.300"/><path d="M1003 848l5-8M1006 842l3 2" stroke-width="1.800"/><path d="M999 847v-6" stroke-width="1.300"/></g>
<path d="M1019 851l6-9 9-1-3 8-6 8-6-1zM1025 842l-1 7 7 0" fill="#eef2f8" stroke="#111"/>
<use href="#chev" x="1046" y="848"/>

<!-- status icon -->
<g transform="translate(1476,868)"><path d="M-7-7h14v16h-14z" fill="#2a3a57" stroke="#9aa"/><path d="M0-5v13M-5 1.500h10" stroke="#1dcc1d" stroke-width="2"/><path d="M0-7l-3 4h6zM0 10l-3-4h6zM-7 1.500l4-3v6zM7 1.500l-4-3v6z" fill="#1dcc1d"/><circle cy="1.500" r="2" fill="#ddd"/></g>
</svg>
</body></html>
